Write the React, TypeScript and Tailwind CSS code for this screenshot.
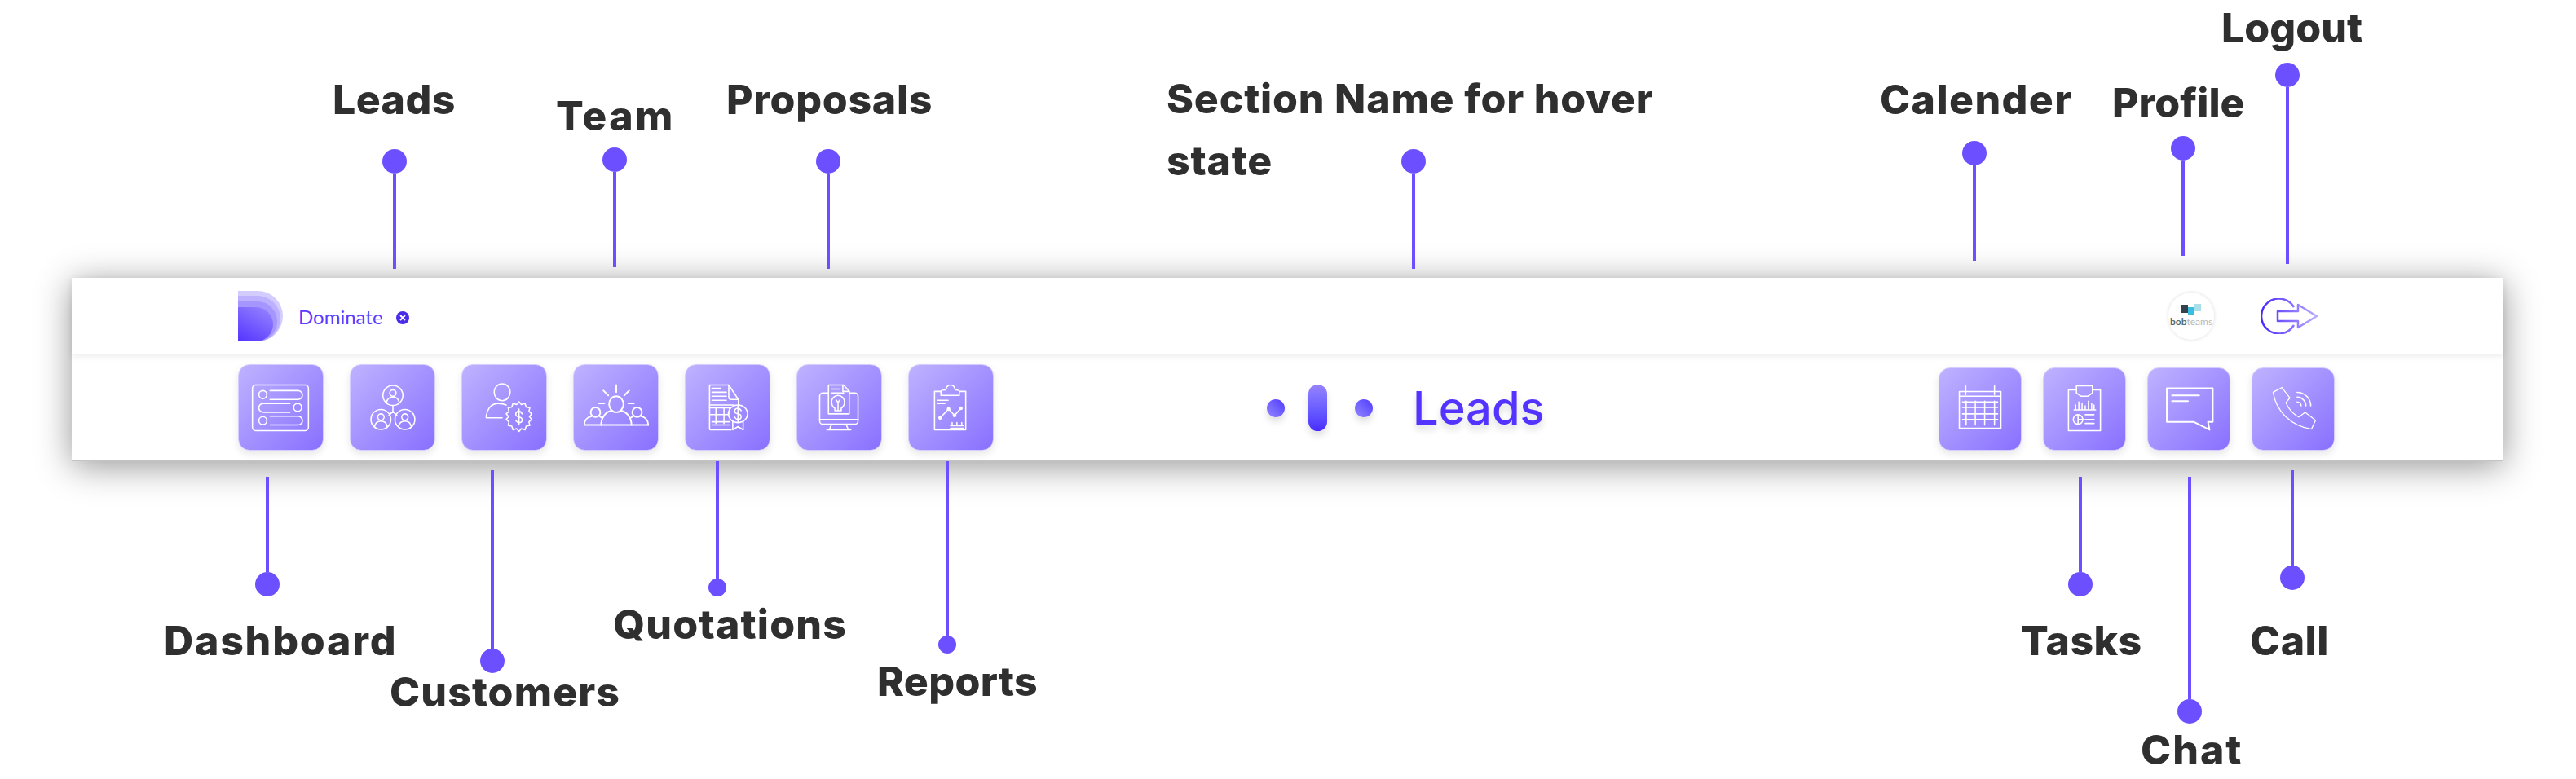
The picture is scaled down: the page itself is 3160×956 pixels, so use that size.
import type { ReactNode } from "react";

const labels = [
  { text: "Leads", cls: "left-[408px] top-[97px] tracking-[0.4px]" },
  { text: "Team", cls: "left-[682px] top-[117px] tracking-[2.4px]" },
  { text: "Proposals", cls: "left-[891px] top-[97px] tracking-[0.7px]" },
  { text: "Calender", cls: "left-[2306px] top-[97px] tracking-[1.4px]" },
  { text: "Profile", cls: "left-[2591px] top-[101px]" },
  { text: "Logout", cls: "left-[2725px] top-[9px]" },
  { text: "Dashboard", cls: "left-[201px] top-[761px] tracking-[1.8px]" },
  { text: "Customers", cls: "left-[478px] top-[824px] tracking-[1.1px]" },
  { text: "Quotations", cls: "left-[752px] top-[741px] tracking-[1.2px]" },
  { text: "Reports", cls: "left-[1076px] top-[811px] tracking-[0.3px]" },
  { text: "Tasks", cls: "left-[2479px] top-[761px] tracking-[0.4px]" },
  { text: "Chat", cls: "left-[2626px] top-[895px] tracking-[2px]" },
  { text: "Call", cls: "left-[2760px] top-[761px] tracking-[0.5px]" },
];

const upPins = [
  { cls: "left-[469px] top-[183px]", line: "h-[117px]" },
  { cls: "left-[739px] top-[181px]", line: "h-[117px]" },
  { cls: "left-[1001px] top-[183px]", line: "h-[117px]" },
  { cls: "left-[1719px] top-[183px]", line: "h-[117px]" },
  { cls: "left-[2407px] top-[173px]", line: "h-[117px]" },
  { cls: "left-[2663px] top-[167px]", line: "h-[117px]" },
  { cls: "left-[2791px] top-[77px]", line: "h-[217px]" },
];

const downPins = [
  { cls: "left-[313px] top-[585px]", line: "h-[117px]", dot: "w-[30px] h-[30px]" },
  { cls: "left-[589px] top-[577px]", line: "h-[219px]", dot: "w-[30px] h-[30px]" },
  { cls: "left-[869px] top-[566px]", line: "h-[144px]", dot: "w-[22px] h-[22px]" },
  { cls: "left-[1151px] top-[566px]", line: "h-[214px]", dot: "w-[22px] h-[22px]" },
  { cls: "left-[2537px] top-[585px]", line: "h-[117px]", dot: "w-[30px] h-[30px]" },
  { cls: "left-[2671px] top-[585px]", line: "h-[273px]", dot: "w-[30px] h-[30px]" },
  { cls: "left-[2797px] top-[577px]", line: "h-[117px]", dot: "w-[30px] h-[30px]" },
];

function Tile({ small, children }: { small?: boolean; children: ReactNode }) {
  return (
    <div
      className={
        (small ? "w-[102px] h-[102px]" : "w-[105px] h-[106px]") +
        " rounded-[14px] border border-[#d5ccff] bg-gradient-to-br from-[#bfb2ff] to-[#8a6fff] shadow-[0_4px_10px_rgba(0,0,0,0.1)]"
      }
    >
      <svg
        viewBox={small ? "0 0 102 102" : "0 0 105 106"}
        className="w-full h-full"
        fill="none"
        stroke="#fff"
        strokeWidth="1.6"
        strokeLinecap="round"
        strokeLinejoin="round"
      >
        {children}
      </svg>
    </div>
  );
}

function Person({ x, y }: { x: number; y: number }) {
  return (
    <g>
      <circle cx={x} cy={y} r="12.5" />
      <circle cx={x} cy={y - 3} r="4" />
      <path d={`M${x - 8} ${y + 9}c1-5 4-7 8-7s7 2 8 7`} />
    </g>
  );
}

function Dollar({ x, y }: { x: number; y: number }) {
  return (
    <path
      d={`M${x + 4} ${y - 4}c-1-2-2.500-3-4-3-2.500 0-4 1.500-4 3.500s1.500 3 4 3.500 4 1.500 4 3.500-1.500 3.500-4 3.500c-1.500 0-3-1-4-3M${x} ${y - 10}v20`}
    />
  );
}

function DashboardIcon() {
  return (
    <Tile>
      <path d="M21 25h62a4 4 0 0 1 4 4v49a4 4 0 0 1-4 4H21a4 4 0 0 1-4-4V29a4 4 0 0 1 4-4Z" />
      <circle cx="30" cy="37" r="5" />
      <path d="M39 32h35a5.500 5.500 0 0 1 0 11H39" />
      <circle cx="73.500" cy="53" r="5" />
      <path d="M64 48H30.500a5.500 5.500 0 0 0 0 11H64" />
      <circle cx="30" cy="69.500" r="5" />
      <path d="M39 64h35a5.500 5.500 0 0 1 0 11H39" />
    </Tile>
  );
}

function LeadsIcon() {
  return (
    <Tile>
      <Person x={53} y={38} />
      <Person x={38} y={68} />
      <Person x={68} y={68} />
      <path d="M53 51v7l-5 5M53 58l5 5" />
    </Tile>
  );
}

function CustomersIcon() {
  return (
    <Tile>
      <ellipse cx="50" cy="34" rx="10" ry="10.500" />
      <path d="M55 50c-3-1.500-6-2-10-2-9 0-15 8-15 18h20" />
      <path d="M71 46l3 3.500 4.500-1.500 1.500 4.500 4.500 1 -1 4.500 3.500 3-3 3.500 3 3.500-3.500 3 1 4.500-4.500 1-1.500 4.500-4.500-1.500-3 3.500-3-3.500-4.500 1.500-1.500-4.500-4.500-1 1-4.500-3.500-3 3-3.500-3-3.500 3.500-3-1-4.500 4.500-1 1.500-4.500 4.500 1.500Z" />
      <Dollar x={71} y={65} />
    </Tile>
  );
}

function TeamIcon() {
  return (
    <Tile>
      <path d="M13 75h80" strokeWidth="2" />
      <path d="M53 25v9M37 32l6 6M69 32l-6 6M31 48h7M68 48h7" strokeWidth="2" />
      <ellipse cx="53" cy="49" rx="9" ry="10" strokeWidth="2" />
      <path d="M34 75c0-9 6-17 13-18M72 75c0-9-6-17-13-18" strokeWidth="2" />
      <circle cx="27" cy="59" r="6" strokeWidth="2" />
      <circle cx="79" cy="59" r="6" strokeWidth="2" />
      <path d="M13 75c0-6 4-10 9-11M32 64l3 2M93 75c0-6-4-10-9-11M74 64l-3 2" strokeWidth="2" />
    </Tile>
  );
}

function QuotationsIcon() {
  return (
    <Tile>
      <path d="M54 62H30V25h24l12 18v7M30 62v18a1 1 0 0 0 1 1h26" />
      <path d="M54 25v15a3 3 0 0 0 3 3h9" />
      <path d="M33 29h11M33 34h18M33 39h18M33 44h18" />
      <path d="M30 50h30M30 53.500h24M38 53v20M48 53v20M55 53v8M33 71h22M33 75h22" />
      <ellipse cx="65.500" cy="61" rx="12" ry="11" />
      <Dollar x={65.500} y={61} />
      <path d="M59 71v10l6.500-4 6.500 4V71" />
    </Tile>
  );
}

function ProposalsIcon() {
  return (
    <Tile>
      <path d="M39 35H32a4 4 0 0 0-4 4v31a4 4 0 0 0 4 4h40a4 4 0 0 0 4-4V39a4 4 0 0 0-4-4h-7" />
      <path d="M28 68h48" />
      <path d="M43 74l-3 7h24l-3-7M37 81h30" />
      <path d="M39 61V25h19l7 8v28Z" />
      <path d="M57 25v8h8M43 30h11M43 35h15" />
      <path d="M47 54c-3-2-4-5-4-8a8 8 0 0 1 16 0c0 3-1 6-4 8v3h-8ZM49 44l2 3 2-3M51 47v9" />
    </Tile>
  );
}

function ReportsIcon() {
  return (
    <Tile>
      <path d="M40 33h-8v48h39V33h-8" />
      <path d="M40 33c0-2 3-2 6-2 1-4 3-6 6-6s5 2 6 6c3 0 5 0 5 2v5H40Z" />
      <path d="M36 44h13M36 48h9" />
      <path d="M39 66l10.600-11 7.400 8 8-9" />
      <circle cx="39" cy="66" r="1.500" fill="#fff" />
      <circle cx="49.600" cy="55" r="1.500" fill="#fff" />
      <circle cx="57" cy="63" r="1.500" fill="#fff" />
      <circle cx="65" cy="54" r="1.500" fill="#fff" />
      <path d="M52 76h16M52 79h16M54 72v2M60 72v2M66 72v2" />
    </Tile>
  );
}

function CalendarIcon() {
  return (
    <Tile small>
      <path d="M25 29h52v46H25ZM25 35h52M33 22v11M69 22v11" />
      <path d="M33.500 41v30M45 41v30M56.700 41v30M69 41v30M29 42h44M29 49h44M29 57h44M29 64h44" />
    </Tile>
  );
}

function TasksIcon() {
  return (
    <Tile small>
      <path d="M41 27H31v51h40V27H61" />
      <path d="M41 22h20v9l-6 4H47l-6-4Z" />
      <path d="M38 52h27M40 52v-6M44 52v-10M48 52v-8M52 52v-5M56 52v-11M60 52v-8M63 52v-6" />
      <circle cx="43" cy="64" r="6" />
      <path d="M43 58v12M43 64h6M52 58h11M52 64h11M52 69h11" />
    </Tile>
  );
}

function ChatIcon() {
  return (
    <Tile small>
      <path d="M23.500 25H81v42h-6l2 10-20-10H23.500Z" strokeWidth="2" />
      <path d="M30 34h34M30 41h20" strokeWidth="2" />
    </Tile>
  );
}

function CallIcon() {
  return (
    <Tile small>
      <path d="M37 24 47 37 42 43C45 50 51 57 58 61L66 55 79 65 74 76C50 73 30 55 26 30Z" strokeWidth="1.300" />
      <path d="M56 30a17 17 0 0 1 17 17M56 36a11 11 0 0 1 11 11M56 42a5 5 0 0 1 5 5" />
    </Tile>
  );
}

function Logo() {
  return (
    <svg viewBox="0 0 56 62" className="w-[56px] h-[62px]">
      <defs>
        <linearGradient id="logo-core" x1="0" y1="1" x2="0.6" y2="0">
          <stop offset="0" stopColor="#5333ff" />
          <stop offset="1" stopColor="#8f7bff" />
        </linearGradient>
      </defs>
      <path d="M0 0h24a31 31 0 0 1 31 31 31 31 0 0 1-31 31H0Z" fill="#d3ccff" />
      <path d="M0 6h24a28 28 0 0 1 28 28 28 28 0 0 1-28 28H0Z" fill="#bdb1ff" />
      <path d="M0 13h24a24 24.500 0 0 1 24 24.500A24.500 24.500 0 0 1 24 62H0Z" fill="#a596ff" />
      <path d="M0 20h22a21 21 0 0 1 21 21 21 21 0 0 1-21 21H0Z" fill="url(#logo-core)" />
    </svg>
  );
}

function LogoutIcon() {
  return (
    <svg viewBox="0 0 71 44" className="w-[71px] h-[44px]" fill="none" strokeWidth="2.500" strokeLinejoin="round">
      <defs>
        <linearGradient id="logout-stroke" x1="0" y1="0" x2="1" y2="0">
          <stop offset="0" stopColor="#4a28ff" />
          <stop offset="1" stopColor="#b9acff" />
        </linearGradient>
      </defs>
      <path
        d="M41 11A21.500 21.500 0 1 0 41 33M21 16H46V8L69 22 46 36V28H21Z"
        stroke="url(#logout-stroke)"
      />
    </svg>
  );
}

function Avatar() {
  return (
    <div className="w-[56px] h-[58px] rounded-full bg-white shadow-[0_0_4px_rgba(0,0,0,0.15)] flex flex-col items-center justify-center">
      <svg viewBox="0 0 24 16" className="w-[24px] h-[16px] -mt-[4px]">
        <rect x="0" y="3" width="8" height="10" fill="#33424c" />
        <rect x="8" y="6" width="8" height="10" fill="#39bde0" />
        <rect x="16" y="2" width="8" height="9" fill="#a9dfe9" />
      </svg>
      <div className="font-['Lato',sans-serif] text-[12px] leading-none mt-[2px] whitespace-nowrap">
        <span className="font-bold text-[#4f7079]">bob</span>
        <span className="text-[#b4b9bb]">teams</span>
      </div>
    </div>
  );
}

export default function App() {
  return (
    <div className="relative w-[3160px] h-[956px] overflow-hidden bg-white pt-[341px] pl-[88px] font-['Inter',sans-serif]">
      {/* the bar */}
      <div className="w-[2983px] h-[225px] bg-white flex flex-col shadow-[0_6px_40px_rgba(0,0,0,0.42)] border-b border-[#c4c4c4]">
        <div className="h-[94px] flex items-center pl-[204px] shadow-[0_2px_8px_rgba(0,0,0,0.08)] z-10 bg-white">
          <Logo />
          <span className="ml-[18px] text-[24px] leading-none mt-[2px] text-[#5a3bff] font-['Lato',sans-serif]">Dominate</span>
          <span className="ml-[16px] mt-[4px] w-[16px] h-[16px] rounded-full bg-[#4a2be8] flex items-center justify-center">
            <svg viewBox="0 0 8 8" className="w-[8px] h-[8px]" stroke="#fff" strokeWidth="1.800">
              <path d="M1 1l6 6M7 1 1 7" />
            </svg>
          </span>
          <div className="ml-auto mr-[227px] flex items-center gap-[57px]">
            <Avatar />
            <LogoutIcon />
          </div>
        </div>
        <div className="flex-1 flex items-end pb-[12px] pl-[204px]">
          <div className="flex gap-[32px]">
            <DashboardIcon />
            <LeadsIcon />
            <CustomersIcon />
            <TeamIcon />
            <QuotationsIcon />
            <ProposalsIcon />
            <ReportsIcon />
          </div>
          <div className="ml-[335px] mb-[24px] flex items-center">
            <div className="w-[22px] h-[22px] rounded-full bg-gradient-to-tr from-[#9683ff] to-[#5333ff] shadow-[0_6px_8px_rgba(0,0,0,0.12)]" />
            <div className="ml-[29px] w-[23px] h-[57px] rounded-full bg-gradient-to-b from-[#9683ff] to-[#4a28ff] shadow-[0_6px_8px_rgba(0,0,0,0.12)]" />
            <div className="ml-[34px] w-[22px] h-[22px] rounded-full bg-gradient-to-tr from-[#9683ff] to-[#5333ff] shadow-[0_6px_8px_rgba(0,0,0,0.12)]" />
            <span className="ml-[49px] text-[56px] leading-none font-medium text-[#5333ff] [text-shadow:0_6px_8px_rgba(0,0,0,0.14)]">Leads</span>
          </div>
          <div className="ml-auto mr-[207px] flex gap-[26px]">
            <CalendarIcon />
            <TasksIcon />
            <ChatIcon />
            <CallIcon />
          </div>
        </div>
      </div>

      {/* callouts drawn over the bar */}
      {upPins.map((p) => (
        <div key={p.cls} className={"absolute w-[30px] flex flex-col items-center " + p.cls}>
          <div className="w-[30px] h-[30px] rounded-full bg-[#6c50ff]" />
          <div className={"w-[4px] bg-[#6c50ff] " + p.line} />
        </div>
      ))}
      {downPins.map((p) => (
        <div key={p.cls} className={"absolute flex flex-col items-center " + p.cls}>
          <div className={"w-[4px] bg-[#6c50ff] " + p.line} />
          <div className={"rounded-full bg-[#6c50ff] " + p.dot} />
        </div>
      ))}
      {labels.map((l) => (
        <div key={l.text} className={"absolute text-[50px] leading-none font-extrabold text-[#2f2f2f] whitespace-nowrap " + l.cls}>
          {l.text}
        </div>
      ))}
      <div className="absolute left-[1431px] top-[83px] text-[50px] leading-[76px] font-extrabold tracking-[0.8px] text-[#2f2f2f] whitespace-nowrap">
        Section Name for hover
        <br />
        state
      </div>
    </div>
  );
}
